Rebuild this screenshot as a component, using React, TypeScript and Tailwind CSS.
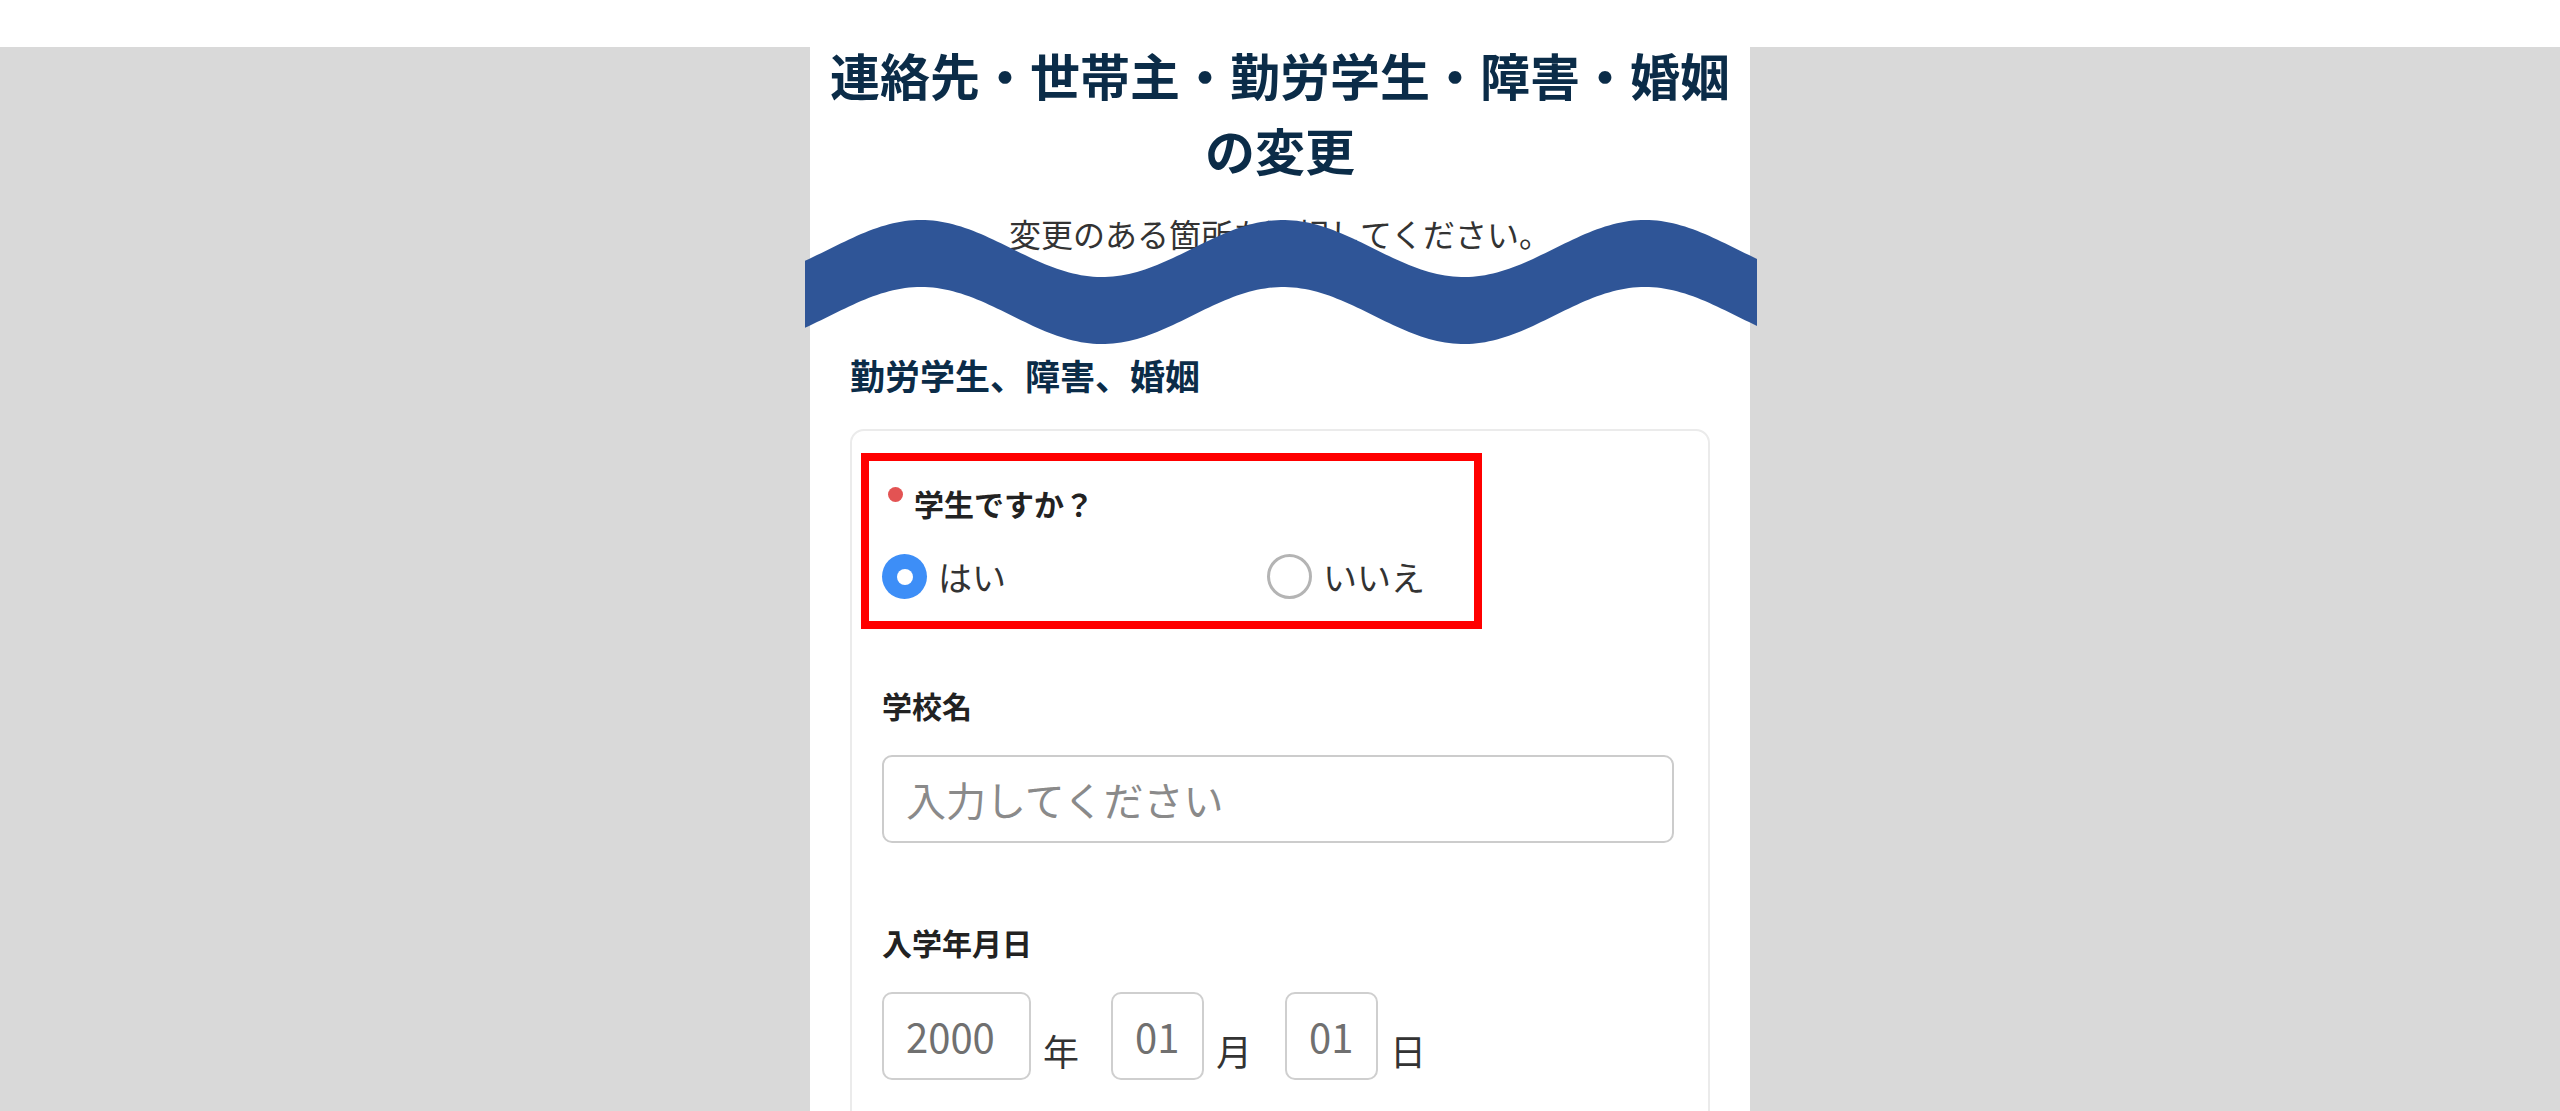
import React from "react";

// wave overlay, page x 805..1757, page y 210..355
const WAVE_W = 952;
const WAVE_H = 145;

function wavePath() {
  const top = (x: number) => 38.5 - 28.5 * Math.cos((2 * Math.PI * (x - 116)) / 362);
  const pts: string[] = [];
  for (let x = 0; x <= WAVE_W; x += 4) pts.push(`${x},${top(x).toFixed(2)}`);
  const back: string[] = [];
  for (let x = WAVE_W; x >= 0; x -= 4) back.push(`${x},${(top(x) + 67).toFixed(2)}`);
  return `M${pts.join(" L")} L${back.join(" L")} Z`;
}

const Radio = ({ checked, label }: { checked: boolean; label: string }) => (
  <label className="flex items-center gap-[11px]">
    {checked ? (
      <span className="flex h-[45px] w-[45px] items-center justify-center rounded-full bg-[#3d8ef7]">
        <span className="h-[16px] w-[16px] rounded-full bg-white" />
      </span>
    ) : (
      <span className="h-[45px] w-[45px] rounded-full border-[3px] border-[#b4b4b4] bg-white" />
    )}
    <span className="text-[34px] leading-[45px] text-[#333]">{label}</span>
  </label>
);

const DateBox = ({ value, w }: { value: string; w: string }) => (
  <input
    readOnly
    value={value}
    className={`${w} h-[88px] rounded-[10px] border-2 border-[#cfcfcf] pl-[22px] text-[40px] text-[#707070] outline-none`}
  />
);

export default function App() {
  return (
    <div className="grid min-h-screen grid-cols-[1fr_940px_1fr] bg-[#d9d9d9] font-['Noto_Sans_CJK_JP',sans-serif]">
      <div>
        <div className="h-[47px] bg-white" />
      </div>

      <main className="relative bg-white px-[40px] pt-[37px]">
        <h1 className="-mx-[40px] whitespace-nowrap text-center text-[50px] font-bold leading-[75px] text-[#0b2c48]">
          連絡先・世帯主・勤労学生・障害・婚姻
          <br />
          の変更
        </h1>
        <p className="mt-[22px] text-center text-[32px] leading-[48px] text-[#333]">
          変更のある箇所を選択してください。
        </p>

        <svg
          className="pointer-events-none absolute left-[-5px] top-[210px]"
          width={WAVE_W}
          height={WAVE_H}
          viewBox={`0 0 ${WAVE_W} ${WAVE_H}`}
        >
          <path d={wavePath()} fill="#2f5597" />
        </svg>

        <h2 className="mt-[92px] text-[35px] font-bold leading-[52px] text-[#0b2c48]">
          勤労学生、障害、婚姻
        </h2>

        <section className="mt-[28px] rounded-[14px] border-2 border-[#ebebeb] pb-[60px] pl-[30px] pr-[34px] pt-[50px]">
          {/* 学生ですか */}
          <div className="relative">
            <div className="flex items-start gap-[11px]">
              <span className="ml-[6px] mt-[6px] h-[15px] w-[15px] rounded-full bg-[#e35353]" />
              <span className="text-[30px] font-bold leading-[45px] text-[#222]">学生ですか？</span>
            </div>
            <div className="mt-[28px] flex">
              <div className="w-[385px]">
                <Radio checked label="はい" />
              </div>
              <Radio checked={false} label="いいえ" />
            </div>
            <div className="pointer-events-none absolute left-[-21px] top-[-28px] h-[176px] w-[621px] border-[8px] border-[#ff0000]" />
          </div>

          <div className="mt-[84px] text-[30px] font-bold leading-[45px] text-[#222]">学校名</div>
          <input
            placeholder="入力してください"
            className="mt-[27px] h-[88px] w-full rounded-[10px] border-2 border-[#cccccc] pl-[22px] text-[40px] text-[#333] outline-none placeholder:text-[#8a8a8a]"
          />

          <div className="mt-[77px] text-[30px] font-bold leading-[45px] text-[#222]">入学年月日</div>
          <div className="mt-[27px] flex items-end">
            <DateBox value="2000" w="w-[149px]" />
            <span className="ml-[12px] mr-[32px] pb-[3px] text-[36px] leading-[54px] text-[#333]">年</span>
            <DateBox value="01" w="w-[93px]" />
            <span className="ml-[12px] mr-[33px] pb-[3px] text-[36px] leading-[54px] text-[#333]">月</span>
            <DateBox value="01" w="w-[93px]" />
            <span className="ml-[12px] pb-[3px] text-[36px] leading-[54px] text-[#333]">日</span>
          </div>
        </section>
      </main>

      <div>
        <div className="h-[47px] bg-white" />
      </div>
    </div>
  );
}
